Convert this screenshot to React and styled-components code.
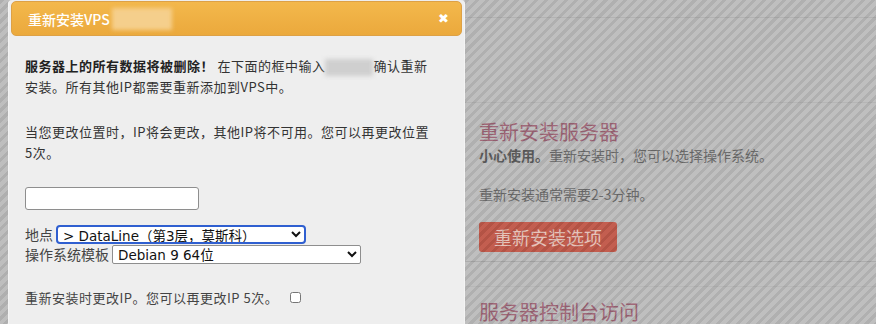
import React from 'react';
import styled, { createGlobalStyle } from 'styled-components';

const GlobalStyle = createGlobalStyle`
  html, body {
    margin: 0;
    padding: 0;
  }
  body {
    font-family: 'Noto Sans CJK SC', 'Noto Sans', sans-serif;
    background: #bcbcbc;
  }
`;

const Screen = styled.div`
  position: relative;
  width: 876px;
  height: 324px;
  overflow: hidden;
`;

const Page = styled.div`
  display: grid;
  grid-template-columns: 463px 1fr;
  height: 100%;
  background: #bdbdbd;
`;

const Sidebar = styled.div`
  background: #bcbcbc;
`;

const Content = styled.div`
  display: flex;
  flex-direction: column;
`;

const Band = styled.div`
  height: ${(p) => p.h}px;
  border-bottom: 1px solid ${(p) => p.line || '#b0b0b0'};
`;

const Section = styled.section`
  padding: ${(p) => p.pad || '0'};
  padding-left: 16px;
  border-bottom: ${(p) => (p.line ? `1px solid ${p.line}` : 'none')};
`;

const SectionTitle = styled.h2`
  margin: 0;
  font-size: 20px;
  line-height: 26px;
  font-weight: normal;
  color: #9d6475;
`;

const Note = styled.p`
  margin: ${(p) => p.m || '0'};
  font-size: 14px;
  line-height: 20px;
  color: #6a6a6a;
  b {
    color: #5a5a5a;
    font-weight: bold;
  }
`;

const RedButton = styled.div`
  display: inline-flex;
  align-items: center;
  justify-content: center;
  margin-top: 18px;
  width: 138px;
  height: 30px;
  border-radius: 3px;
  background: #c1594a;
  color: #e6c3ba;
  font-size: 18px;
`;

const Overlay = styled.div`
  position: absolute;
  inset: 0;
  background: repeating-linear-gradient(
    135deg,
    rgba(0, 0, 0, 0.07) 0px,
    rgba(0, 0, 0, 0.07) 3px,
    rgba(255, 255, 255, 0.03) 3px,
    rgba(255, 255, 255, 0.03) 7px
  );
`;

const Dialog = styled.div`
  position: absolute;
  left: 8px;
  top: 0;
  width: 451px;
  height: 340px;
  padding: 1px 2px;
  background: #eeeeee;
  border-left: 1px solid #f4f4f4;
  border-right: 1px solid #f4f4f4;
  border-radius: 4px;
`;

const Header = styled.div`
  display: flex;
  align-items: center;
  justify-content: space-between;
  height: 33px;
  padding: 0 12px 0 16px;
  background: linear-gradient(#f3b84c, #eba93c);
  border: 1px solid #dda146;
  border-radius: 5px;
  color: #ffffff;
`;

const Title = styled.div`
  display: flex;
  align-items: center;
  font-size: 14px;
  font-weight: 500;
`;

const Close = styled.span`
  font-family: 'DejaVu Sans', sans-serif;
  font-size: 13px;
  font-weight: bold;
  color: #fff;
`;

const Redacted = styled.span`
  display: inline-block;
  width: ${(p) => p.w}px;
  height: ${(p) => p.h}px;
  margin: 0 ${(p) => p.mr || 0}px 0 ${(p) => p.ml || 0}px;
  vertical-align: middle;
  background: ${(p) => p.bg};
  filter: blur(2px);
`;

const Body = styled.div`
  width: 409px;
  padding: 19px 0 0 14px;
  color: #333333;
  font-size: 13px;
  line-height: 21px;
  letter-spacing: 0.5px;
`;

const Para = styled.p`
  margin: 0 0 24px 0;
  b {
    font-weight: bold;
    color: #222;
  }
`;

const TextInput = styled.input`
  display: block;
  box-sizing: border-box;
  width: 174px;
  height: 23px;
  margin: 0;
  border: 1px solid #8e8e8e;
  border-radius: 3px;
  background: #fff;
`;

const Rows = styled.div`
  margin-top: 15px;
  display: flex;
  flex-direction: column;
  gap: 1px;
`;

const Row = styled.label`
  display: flex;
  align-items: center;
  gap: 3px;
  font-size: 14px;
  line-height: 19px;
  letter-spacing: 0;
  color: #444;
`;

const Select = styled.select`
  box-sizing: border-box;
  width: ${(p) => p.w}px;
  height: 19px;
  padding: 0 1px;
  font-family: 'DejaVu Sans', 'Noto Sans CJK SC', sans-serif;
  font-size: 13.5px;
  color: #111;
  background: #fff;
  border: ${(p) => (p.focus ? '2px solid #2f5fd0' : '1px solid #8e8e8e')};
  border-radius: ${(p) => (p.focus ? '4px' : '2px')};
  outline: none;
`;

const CheckRow = styled.label`
  display: flex;
  align-items: center;
  gap: 12px;
  margin-top: 23px;
  font-size: 13px;
  color: #444;
  white-space: nowrap;
`;

const Box = styled.input`
  margin: 0;
  width: 11px;
  height: 11px;
`;

export default function App() {
  return (
    <Screen>
      <GlobalStyle />
      <Page>
        <Sidebar />
        <Content>
          <Band h={17} />
          <Band h={84} line="#b3b3b3" />
          <Section pad="16px 0 9px" line="#a9a9a9">
            <SectionTitle>重新安装服务器</SectionTitle>
            <Note>
              <b>小心使用。</b>重新安装时，您可以选择操作系统。
            </Note>
            <Note m="19px 0 0">重新安装通常需要2-3分钟。</Note>
            <RedButton>重新安装选项</RedButton>
          </Section>
          <Band h={24} line="#b5b5b5" />
          <Section pad="12px 0 0">
            <SectionTitle>服务器控制台访问</SectionTitle>
          </Section>
        </Content>
      </Page>
      <Overlay />
      <Dialog>
        <Header>
          <Title>
            重新安装VPS
            <Redacted w={60} h={22} ml={2} bg="#f5cf8c" />
          </Title>
          <Close>✖</Close>
        </Header>
        <Body>
          <Para>
            <b>服务器上的所有数据将被删除！</b> 在下面的框中输入
            <Redacted w={48} h={17} bg="#cfcfcf" />
            确认重新安装。所有其他IP都需要重新添加到VPS中。
          </Para>
          <Para>当您更改位置时，IP将会更改，其他IP将不可用。您可以再更改位置5次。</Para>
          <TextInput type="text" />
          <Rows>
            <Row>
              地点
              <Select w={250} focus defaultValue="dl">
                <option value="dl">&gt; DataLine（第3层，莫斯科）</option>
              </Select>
            </Row>
            <Row>
              操作系统模板
              <Select w={249} defaultValue="deb">
                <option value="deb">Debian 9 64位</option>
              </Select>
            </Row>
          </Rows>
          <CheckRow>
            重新安装时更改IP。您可以再更改IP 5次。
            <Box type="checkbox" />
          </CheckRow>
        </Body>
      </Dialog>
    </Screen>
  );
}
